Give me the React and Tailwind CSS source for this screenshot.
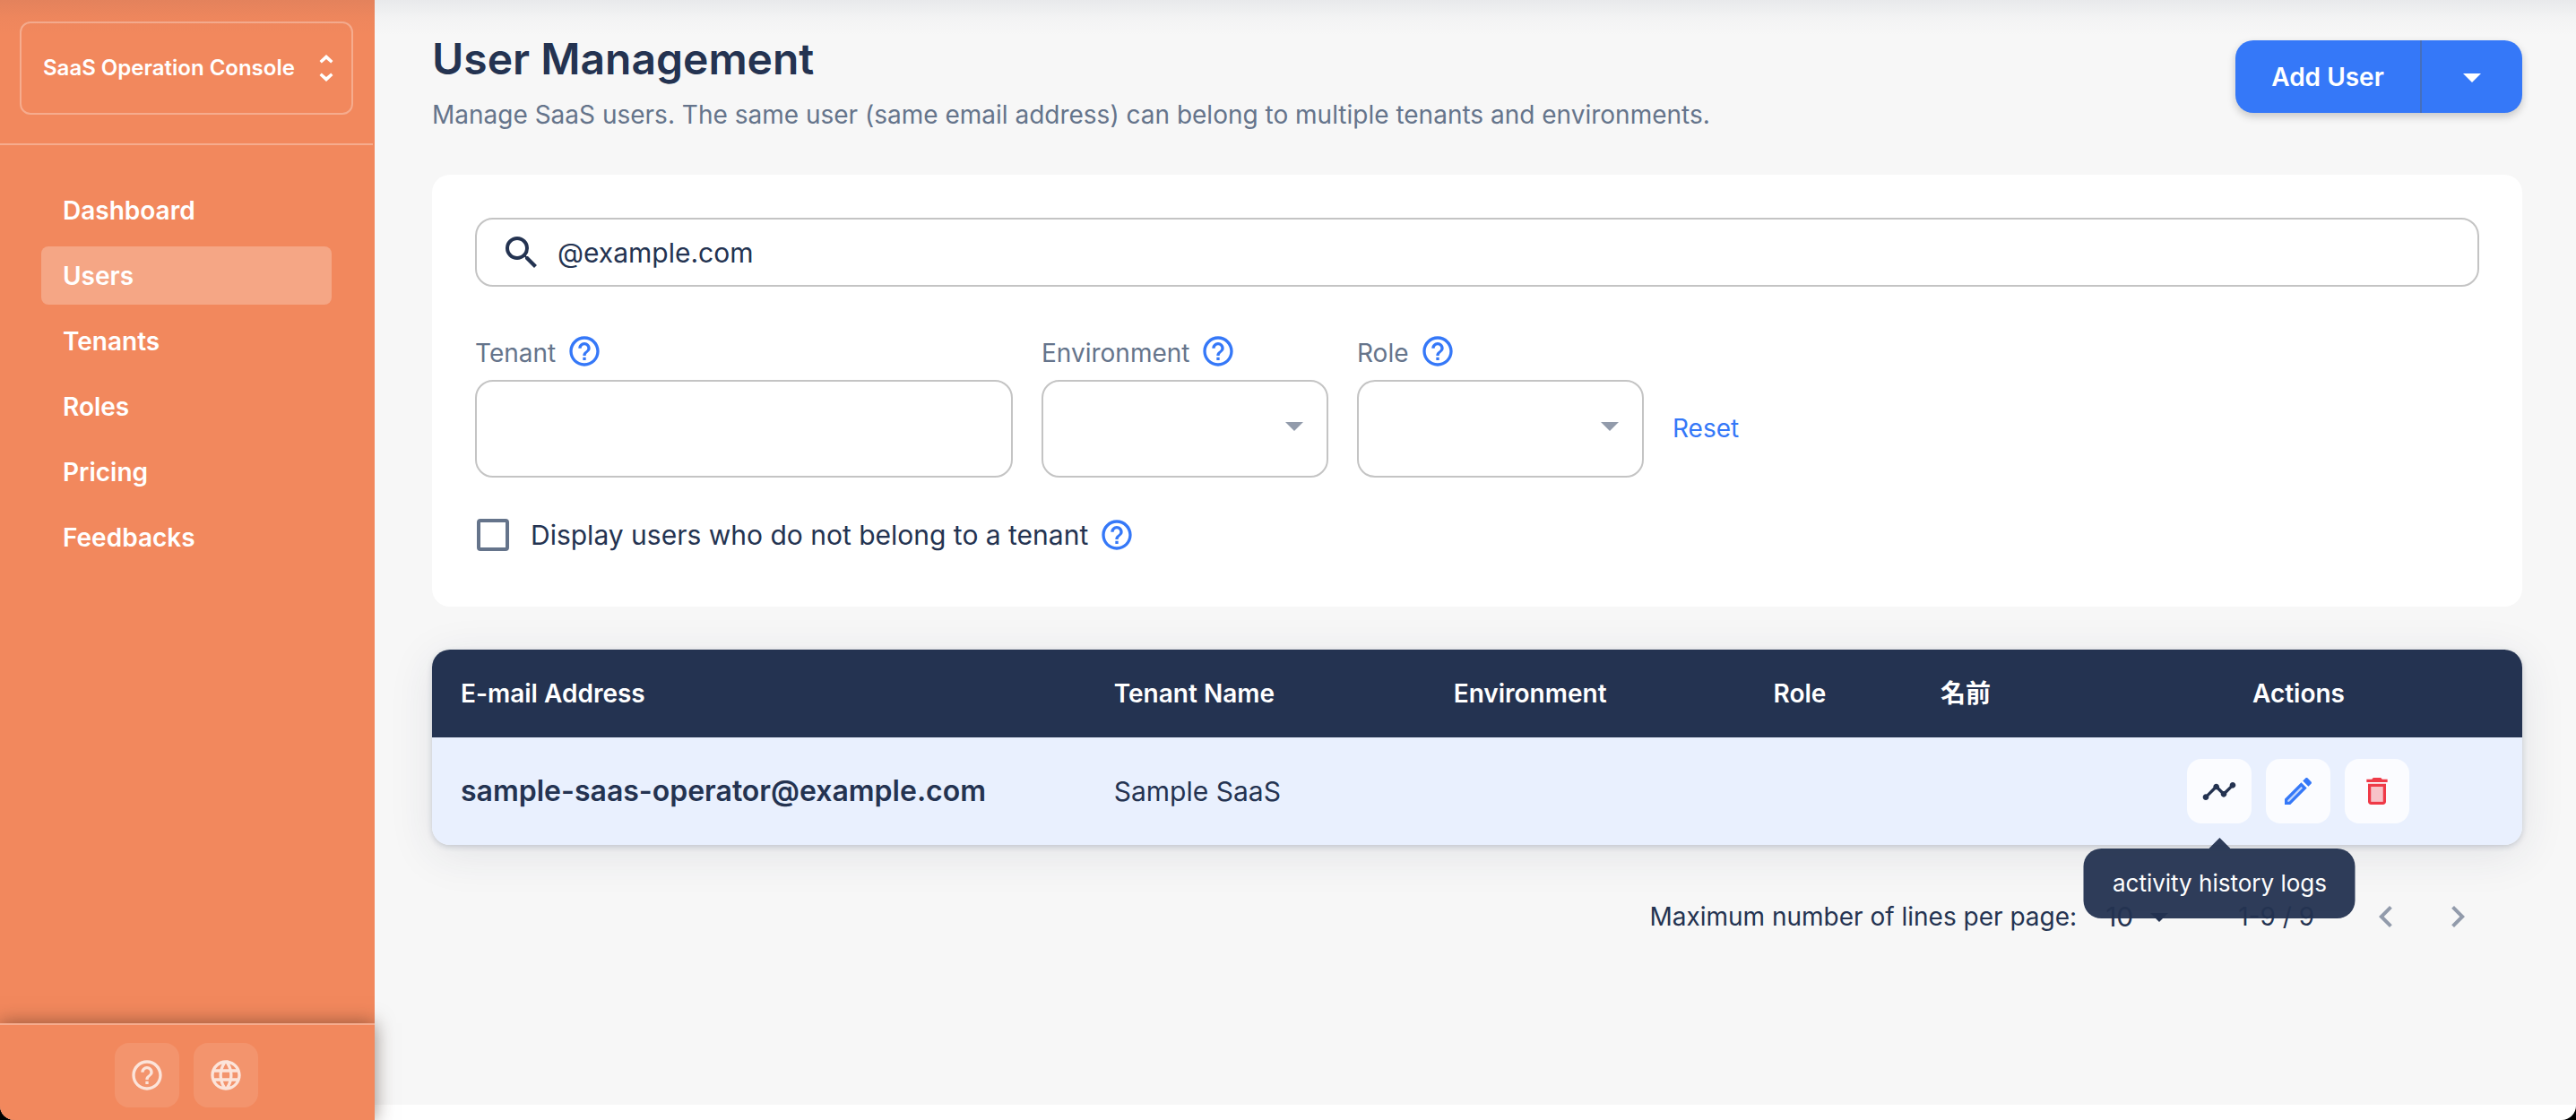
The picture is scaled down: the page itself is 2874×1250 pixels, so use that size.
import { MdHelpOutline, MdLanguage, MdSearch, MdArrowDropDown, MdTimeline, MdKeyboardArrowLeft, MdKeyboardArrowRight } from "react-icons/md";

const navItems = ["Dashboard", "Users", "Tenants", "Roles", "Pricing", "Feedbacks"];

function SelectorIcon() {
  return (
    <svg className="h-[30px] w-4 shrink-0" viewBox="0 0 16 30" fill="currentColor" aria-hidden="true">
      <path d="M8 0l7.500 7-2.300 2.600L8 4.900 2.800 9.600.500 7z" />
      <path d="M8 30l7.500-7-2.300-2.600L8 25.100l-5.200-4.700L.500 23z" />
    </svg>
  );
}

function EditIcon() {
  return (
    <svg className="size-10" viewBox="0 0 24 24" fill="currentColor" aria-hidden="true">
      <path opacity=".3" d="M5 18.080V19h.920l9.060-9.060-.920-.920z" />
      <path d="M20.710 7.040c.390-.390.390-1.020 0-1.410l-2.340-2.340c-.200-.200-.450-.290-.710-.290s-.510.100-.700.290l-1.830 1.830 3.750 3.750 1.830-1.830zM3 17.250V21h3.750L17.810 9.940l-3.750-3.750L3 17.250zM5.920 19H5v-.920l9.060-9.060.920.920L5.920 19z" />
    </svg>
  );
}

function DeleteIcon() {
  return (
    <svg className="size-10" viewBox="0 0 24 24" fill="currentColor" aria-hidden="true">
      <path opacity=".3" d="M8 9h8v10H8z" />
      <path d="M15.500 4l-1-1h-5l-1 1H5v2h14V4zM6 19c0 1.100.900 2 2 2h8c1.100 0 2-.900 2-2V7H6v12zM8 9h8v10H8V9z" />
    </svg>
  );
}

function Help({ label }) {
  return (
    <button type="button" aria-label={label} className="text-[#3578f8]">
      <MdHelpOutline className="size-10" />
    </button>
  );
}

function FieldLabel({ id, label }) {
  return (
    <div className="mb-3 flex h-10 items-center gap-3">
      <label htmlFor={id} className="pt-1">{label}</label>
      <Help label={`About ${label}`} />
    </div>
  );
}

function SelectField({ id, label }) {
  return (
    <div className="w-80">
      <FieldLabel id={id} label={label} />
      <div className="relative">
        <select id={id} defaultValue="" className="block h-[109px] w-full appearance-none rounded-[20px] border-2 border-[#c4c4c4] bg-white px-7">
          <option value=""></option>
        </select>
        <MdArrowDropDown className="pointer-events-none absolute right-3.5 top-[27px] size-12 text-[#929bab]" />
      </div>
    </div>
  );
}

export default function App() {
  return (
    <div className="bg-black">
      <div className="relative flex min-h-screen overflow-hidden rounded-b-2xl bg-white font-[Inter,'Noto_Sans_CJK_JP',sans-serif] text-[28px] leading-10 text-[#243351]">
        <div className="pointer-events-none absolute inset-x-0 top-0 z-20 h-10 bg-linear-to-b from-[#243351]/7 via-[#243351]/2 to-transparent" />
        <aside className="z-10 flex w-[418px] shrink-0 flex-col border-r-2 border-[#f2885d] bg-[#f2885d] font-semibold text-white">
          <div className="border-b-2 border-white/30 px-[22px] pb-8 pt-6">
            <button type="button" className="flex h-[104px] w-full items-center justify-between rounded-xl border-2 border-white/30 px-6 pr-5 text-2xl">
              <span>SaaS Operation Console</span>
              <SelectorIcon />
            </button>
          </div>
          <nav className="mt-10 flex flex-1 flex-col gap-2 px-[46px]">
            {navItems.map((item) => (
              <a
                key={item}
                href="#"
                aria-current={item === "Users" ? "page" : undefined}
                className={item === "Users" ? "flex h-[65px] items-center rounded-lg bg-white/25 px-6" : "flex h-[65px] items-center rounded-lg px-6"}
              >
                {item}
              </a>
            ))}
          </nav>
          <div className="-mr-0.5 flex justify-center gap-4 border-t-2 border-white/30 bg-[#f2885d] pb-3.5 pr-0.5 pt-5 shadow-[0_0_20px_rgba(60,40,30,0.55)]">
            <button type="button" aria-label="Help" className="flex size-[72px] items-center justify-center rounded-2xl bg-white/10 text-white/75">
              <MdHelpOutline className="size-10" />
            </button>
            <button type="button" aria-label="Language" className="flex size-[72px] items-center justify-center rounded-2xl bg-white/10 text-white/75">
              <MdLanguage className="size-10" />
            </button>
          </div>
        </aside>

        <main className="mb-[17px] min-w-0 flex-1 bg-[#f7f7f7] pl-16 pr-[60px] pt-[34px]">
          <header className="flex items-start justify-between">
            <div>
              <h1 className="text-5xl font-semibold leading-[64px]">User Management</h1>
              <p className="mt-2.5 text-[#65748b]">Manage SaaS users. The same user (same email address) can belong to multiple tenants and environments.</p>
            </div>
            <div className="mt-[11px] flex h-[81px] overflow-hidden rounded-[20px] bg-[#3578f8] font-semibold text-white shadow-[0_4px_10px_rgba(0,0,0,0.2)]">
              <button type="button" className="w-[208px] border-r-2 border-[#456fbd]">Add User</button>
              <button type="button" aria-label="More ways to add a user" className="flex w-28 items-center justify-center">
                <MdArrowDropDown className="size-12" />
              </button>
            </div>
          </header>

          <section className="mt-[47px] rounded-[20px] bg-white px-12 pb-15 pt-12">
            <div className="flex h-[77px] items-center gap-4 rounded-[20px] border-2 border-[#c4c4c4] px-[26px]">
              <MdSearch className="size-12 shrink-0" />
              <input type="text" aria-label="Search users" defaultValue="@example.com" className="w-full bg-transparent text-[30px] outline-none" />
            </div>
            <div className="mt-[52px] flex items-start gap-8 text-[#65748b]">
              <div className="w-[600px]">
                <FieldLabel id="tenant" label="Tenant" />
                <input id="tenant" type="text" className="block h-[109px] w-full rounded-[20px] border-2 border-[#c4c4c4] px-7" />
              </div>
              <SelectField id="environment" label="Environment" />
              <SelectField id="role" label="Role" />
              <button type="button" className="mt-[86px] text-[#3578f8]">Reset</button>
            </div>
            <div className="mt-11 flex items-center gap-3">
              <label className="flex items-center gap-6 text-[30px]">
                <input type="checkbox" className="ml-0.5 size-9 appearance-none rounded-sm border-4 border-[#65748b]" />
                Display users who do not belong to a tenant
              </label>
              <Help label="About users without a tenant" />
            </div>
          </section>

          <div className="mt-12 rounded-[20px] shadow-[0_2px_6px_rgba(36,51,81,0.2),0_10px_50px_rgba(36,51,81,0.1)]">
            <table className="w-full table-fixed text-left">
              <colgroup>
                <col className="w-[31.25%]" />
                <col className="w-[16.25%]" />
                <col className="w-[15.3%]" />
                <col className="w-[8%]" />
                <col className="w-[7.8%]" />
                <col />
              </colgroup>
              <thead className="bg-[#243351] text-white">
                <tr className="h-[98px] *:px-8 *:font-semibold">
                  <th className="rounded-tl-[20px]">E-mail Address</th>
                  <th>Tenant Name</th>
                  <th>Environment</th>
                  <th>Role</th>
                  <th>名前</th>
                  <th className="rounded-tr-[20px] text-center">Actions</th>
                </tr>
              </thead>
              <tbody className="text-[30px]">
                <tr className="h-[120px] *:bg-[#e9f0fe] *:px-8">
                  <td className="rounded-bl-[20px] text-[32px] font-semibold">sample-saas-operator@example.com</td>
                  <td>Sample SaaS</td>
                  <td></td>
                  <td></td>
                  <td></td>
                  <td className="rounded-br-[20px]">
                    <div className="flex justify-center gap-4">
                      <div className="relative">
                        <button type="button" aria-label="Activity history logs" aria-describedby="activity-tip" className="flex size-[72px] items-center justify-center rounded-2xl bg-white/80">
                          <MdTimeline className="size-10" />
                        </button>
                        <div id="activity-tip" role="tooltip" className="absolute left-1/2 top-[88px] z-30 flex -translate-x-1/2 flex-col items-center opacity-95">
                          <div className="h-3 w-6 bg-[#243351] [clip-path:polygon(50%_0,100%_100%,0_100%)]" />
                          <div className="whitespace-nowrap rounded-[20px] bg-[#243351] px-8 py-[19px] text-[26px] text-white">activity history logs</div>
                        </div>
                      </div>
                      <button type="button" aria-label="Edit" className="flex size-[72px] items-center justify-center rounded-2xl bg-white/80 text-[#3578f8]">
                        <EditIcon />
                      </button>
                      <button type="button" aria-label="Delete" className="flex size-[72px] items-center justify-center rounded-2xl bg-white/80 text-[#ef3a48]">
                        <DeleteIcon />
                      </button>
                    </div>
                  </td>
                </tr>
              </tbody>
            </table>
          </div>

          <div className="mt-10 flex h-20 items-center justify-end pr-8">
            <label htmlFor="rows">Maximum number of lines per page:</label>
            <div className="relative ml-4">
              <select id="rows" defaultValue="10" className="block w-[100px] appearance-none bg-transparent pl-4 text-[30px]">
                <option>10</option>
              </select>
              <MdArrowDropDown className="pointer-events-none absolute -top-1 right-0 size-12" />
            </div>
            <span className="ml-16">1-9 / 9</span>
            <div className="ml-10 flex text-[#929bab]">
              <button type="button" aria-label="Previous page" className="flex size-20 items-center justify-center">
                <MdKeyboardArrowLeft className="size-12" />
              </button>
              <button type="button" aria-label="Next page" className="flex size-20 items-center justify-center">
                <MdKeyboardArrowRight className="size-12" />
              </button>
            </div>
          </div>
        </main>
      </div>
    </div>
  );
}
